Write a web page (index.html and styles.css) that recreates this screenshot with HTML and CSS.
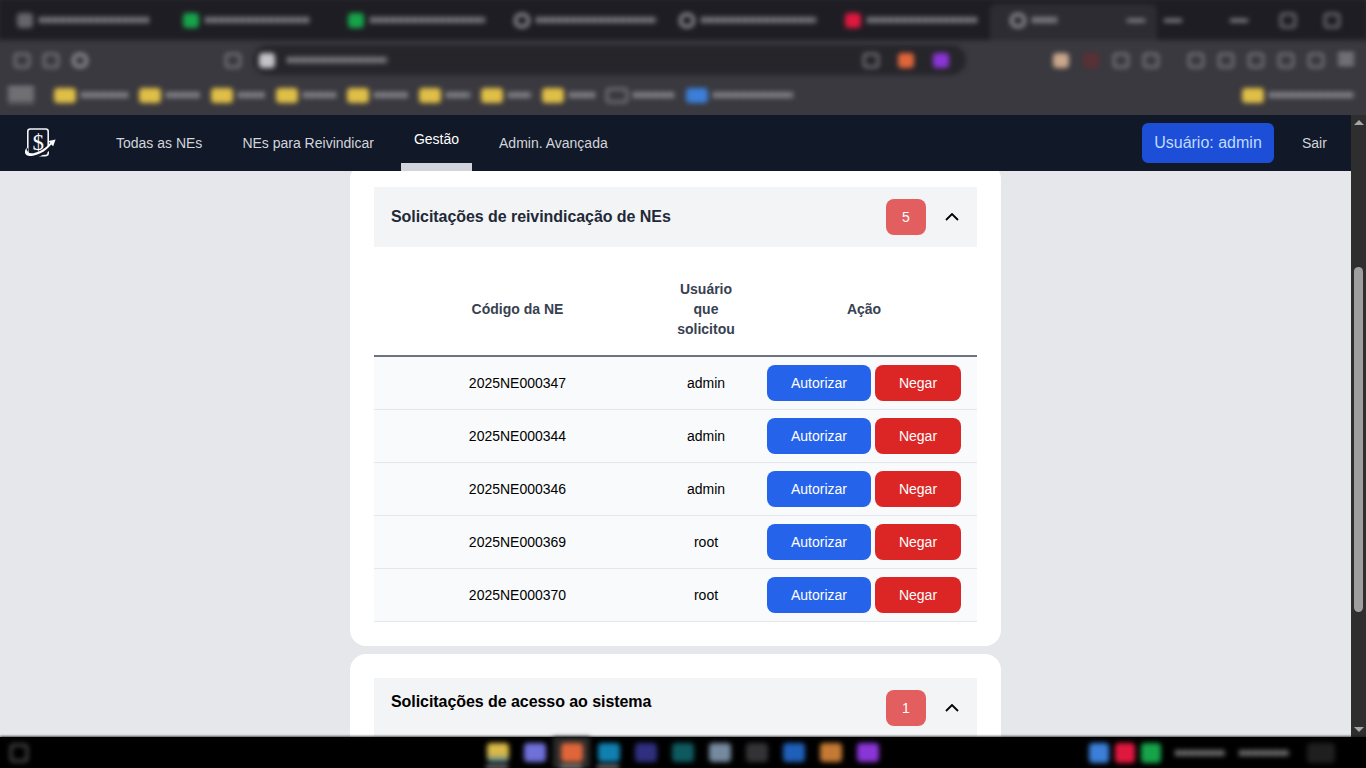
FILE: index.html
```html
<!DOCTYPE html>
<html lang="pt-BR">
<head>
<meta charset="utf-8">
<title>Gestão</title>
<link rel="stylesheet" href="styles.css">
</head>
<body>
<div class="browser">
  <div class="tabstrip">
    <div class="tab"><i class="ico grey"></i><b class="bar w110"></b></div>
    <div class="tab"><i class="ico green"></i><b class="bar w105"></b></div>
    <div class="tab"><i class="ico green"></i><b class="bar w115"></b></div>
    <div class="tab"><i class="ico ring"></i><b class="bar w120"></b></div>
    <div class="tab"><i class="ico ring"></i><b class="bar w115"></b></div>
    <div class="tab"><i class="ico crimson"></i><b class="bar w110"></b></div>
    <div class="tab tab-active"><i class="ico ring"></i><b class="bar w25"></b><span class="spacer"></span><i class="dash"></i></div>
    <i class="dash plus"></i>
    <span class="spacer"></span>
    <i class="dash"></i><i class="ico ghost"></i><i class="ico ghost"></i>
  </div>
  <div class="toolbar">
    <i class="ico ghost"></i><i class="ico ghost"></i><i class="ico ring"></i>
    <i class="ico ghost home"></i>
    <div class="address">
      <i class="ico pale"></i><b class="bar w100"></b><span class="spacer"></span>
      <i class="ico ghost"></i><i class="ico orange"></i><i class="ico purple"></i>
    </div>
    <div class="ext">
      <i class="ico peach"></i><i class="ico darkred"></i><i class="ico ghost"></i><i class="ico ghost"></i>
      <i class="ext-gap"></i>
      <i class="ico ghost"></i><i class="ico ghost"></i><i class="ico ghost"></i><i class="ico ghost"></i><i class="ico ghost"></i><i class="ico lines"></i>
    </div>
  </div>
  <div class="bookmarks">
    <i class="ico lines menu"></i>
    <div class="mark"><i class="ico yellow"></i><b class="bar w47"></b></div>
    <div class="mark"><i class="ico yellow"></i><b class="bar w34"></b></div>
    <div class="mark"><i class="ico yellow"></i><b class="bar w27"></b></div>
    <div class="mark"><i class="ico yellow"></i><b class="bar w33"></b></div>
    <div class="mark"><i class="ico yellow"></i><b class="bar w34"></b></div>
    <div class="mark"><i class="ico yellow"></i><b class="bar w24"></b></div>
    <div class="mark"><i class="ico yellow"></i><b class="bar w23"></b></div>
    <div class="mark"><i class="ico yellow"></i><b class="bar w26"></b></div>
    <div class="mark"><i class="ico ghost"></i><b class="bar w42"></b></div>
    <div class="mark"><i class="ico blue"></i><b class="bar w80"></b></div>
    <span class="spacer"></span>
    <div class="mark"><i class="ico yellow"></i><b class="bar w85"></b></div>
  </div>
</div>

<div class="app">
  <div class="page">
    <nav class="nav">
      <svg class="logo" viewBox="0 0 32 30" aria-hidden="true">
        <rect x="3.8" y="1" width="20.4" height="26.6" rx="2.5" fill="none" stroke="#f3f4f6" stroke-width="1.6"/>
        <text x="14.3" y="21.5" text-anchor="middle" class="logo-text">$</text>
        <path d="M3 20 C-1 26 3 29 9 28 C17 27 24 22 28 17" fill="none" stroke="#111827" stroke-width="4"/>
        <path d="M2.6 19.4 C-1.6 26 3 29 9 27.8 C17 26.4 23.6 21.4 27.2 16.6 L29.2 18.2 L31.6 11.4 L24.4 13 L26 15 C22 20 16 24 9.4 25.2 C5 26 2.2 24 2.6 19.4 Z" fill="#f9fafb"/>
      </svg>
      <div class="nav-links">
        <a class="nav-link">Todas as NEs</a>
        <a class="nav-link">NEs para Reivindicar</a>
        <a class="nav-link nav-link-active">Gestão</a>
        <a class="nav-link">Admin. Avançada</a>
      </div>
      <div class="nav-user">Usuário: admin</div>
      <a class="nav-exit">Sair</a>
    </nav>
    <main class="content">
      <section class="card">
        <header class="card-head">
          <h2 class="card-title">Solicitações de reivindicação de NEs</h2>
          <span class="badge">5</span>
          <svg class="chevron" viewBox="0 0 14 8" aria-hidden="true"><path d="M1 7 L7 1 L13 7" fill="none" stroke="#000" stroke-width="1.8"/></svg>
        </header>
        <table class="table">
          <colgroup><col class="col-code"><col class="col-user"><col class="col-action"></colgroup>
          <thead>
            <tr><th>Código da NE</th><th>Usuário que solicitou</th><th>Ação</th></tr>
          </thead>
          <tbody>
            <tr><td>2025NE000347</td><td>admin</td><td><div class="actions"><button class="btn btn-ok">Autorizar</button><button class="btn btn-no">Negar</button></div></td></tr>
            <tr><td>2025NE000344</td><td>admin</td><td><div class="actions"><button class="btn btn-ok">Autorizar</button><button class="btn btn-no">Negar</button></div></td></tr>
            <tr><td>2025NE000346</td><td>admin</td><td><div class="actions"><button class="btn btn-ok">Autorizar</button><button class="btn btn-no">Negar</button></div></td></tr>
            <tr><td>2025NE000369</td><td>root</td><td><div class="actions"><button class="btn btn-ok">Autorizar</button><button class="btn btn-no">Negar</button></div></td></tr>
            <tr><td>2025NE000370</td><td>root</td><td><div class="actions"><button class="btn btn-ok">Autorizar</button><button class="btn btn-no">Negar</button></div></td></tr>
          </tbody>
        </table>
      </section>
      <section class="card">
        <header class="card-head">
          <h2 class="card-title card-title-raised">Solicitações de acesso ao sistema</h2>
          <span class="badge">1</span>
          <svg class="chevron" viewBox="0 0 14 8" aria-hidden="true"><path d="M1 7 L7 1 L13 7" fill="none" stroke="#000" stroke-width="1.8"/></svg>
        </header>
      </section>
    </main>
  </div>
  <div class="scrollbar">
    <i class="arrow arrow-up"></i>
    <i class="thumb"></i>
    <span class="spacer"></span>
    <i class="arrow arrow-down"></i>
  </div>
</div>

<footer class="taskbar">
  <i class="ico ghost start"></i>
  <div class="dock">
    <div class="slot"><i class="ico yellowblue"></i><u class="pin"></u></div>
    <div class="slot"><i class="ico violet"></i></div>
    <div class="slot slot-active"><i class="ico orange"></i><u class="pin"></u></div>
    <div class="slot"><i class="ico teal"></i><u class="pin"></u></div>
    <div class="slot"><i class="ico indigo"></i></div>
    <div class="slot"><i class="ico darkteal"></i></div>
    <div class="slot"><i class="ico slate"></i></div>
    <div class="slot"><i class="ico dim"></i></div>
    <div class="slot"><i class="ico royal"></i></div>
    <div class="slot"><i class="ico amber"></i></div>
    <div class="slot"><i class="ico purple"></i></div>
  </div>
  <div class="tray">
    <i class="ico blue"></i><i class="ico crimson"></i><i class="ico green"></i>
    <b class="bar w50 tray-bar"></b><b class="bar w50 tray-bar"></b>
    <i class="ico dim box"></i>
  </div>
</footer>
</body>
</html>
```

FILE: styles.css
```css
* { box-sizing: border-box; }
html, body { margin: 0; height: 100%; }
body {
  width: 1366px; height: 768px; overflow: hidden;
  display: flex; flex-direction: column;
  font-family: "Liberation Sans", Arial, sans-serif;
  font-size: 14px; background: #000;
}

/* Blurred browser chrome */
.browser { height: 115px; flex: none; overflow: hidden; background: #3a393f; }
.tabstrip, .toolbar, .bookmarks { display: flex; align-items: center; filter: blur(2.4px); }
.tabstrip { height: 42px; margin: -2px -2px 0; padding: 2px 0 0 10px; background: #1e1d23; }
.toolbar { height: 38px; padding: 2px 0 0 14px; gap: 13px; }
.bookmarks { height: 37px; padding: 0 12px 3px 8px; }
.spacer { flex: 1; }
.tab { width: 165.5px; height: 40px; padding-left: 9px; display: flex; align-items: center; gap: 6px; flex: none; }
.tab-active {
  width: 167px; height: 36px; align-self: flex-end; margin-left: -11px; padding: 0 12px 4px 20px;
  background: #2d2c32; border-radius: 6px 6px 0 0;
}
.ico { width: 16px; height: 15px; flex: none; display: block; border-radius: 4px; background: #77767c; }
.bar {
  display: block; height: 6px; flex: none; opacity: .6;
  background: repeating-linear-gradient(90deg, #c4c3c7 0 5px, #77767c 5px 7px);
}
.w23 { width: 23px; } .w24 { width: 24px; } .w25 { width: 25px; } .w26 { width: 26px; } .w27 { width: 27px; }
.w33 { width: 33px; } .w34 { width: 34px; } .w42 { width: 42px; } .w47 { width: 47px; } .w50 { width: 50px; }
.w80 { width: 80px; } .w85 { width: 85px; } .w100 { width: 100px; } .w105 { width: 105px; }
.w110 { width: 110px; } .w115 { width: 115px; } .w120 { width: 120px; }
.dash { display: block; width: 18px; height: 3px; background: #9b9aa0; flex: none; }
.plus { margin-left: 7px; }
.tabstrip > .dash:not(.plus) { margin-right: 32px; }
.tabstrip > .ghost { margin-right: 28px; }
.grey { background: #66656b; }
.ghost { background: transparent; border: 2px solid #8a898f; }
.ring { background: transparent; border: 3px solid #a09fa4; border-radius: 7px; }
.pale { background: #c4c3c7; }
.green { background: #17a34a; }
.crimson { background: #e0183f; }
.orange { background: #e0663a; }
.purple { background: #8a35d6; }
.peach { background: #c9a78c; }
.darkred { background: #5a3035; }
.yellow { background: #e0bf48; }
.blue { background: #3b7fd8; }
.yellowblue { background: linear-gradient(#d9b948 60%, #3f7fa0); }
.violet { background: #6f70d8; }
.teal { background: #1180b0; }
.indigo { background: #2f2f80; }
.darkteal { background: #0e5a60; }
.slate { background: #76899f; }
.dim { background: #333336; }
.royal { background: #1f5fb8; }
.amber { background: #c47a35; }
.lines { background: repeating-linear-gradient(#c2c1c5 0 2px, transparent 2px 5px); border-radius: 0; }
.home { margin-left: 124px; }
.address {
  width: 713px; height: 30px; border-radius: 15px; background: #26252a;
  display: flex; align-items: center; gap: 19px; padding: 0 17px 0 6px; margin-left: -1px;
}
.address .bar { margin-left: -7px; }
.ext { display: flex; align-items: center; gap: 14px; margin-left: 74px; }
.ext-gap { width: 15px; margin: 0 -7px; }
.menu { width: 26px; height: 16px; margin-right: 20px; }
.mark { display: flex; align-items: center; gap: 5px; flex: none; margin-right: 11px; }
.mark .ico { width: 22px; }
.mark:last-child { margin-right: 0; }

/* App */
.app { height: 622px; flex: none; display: flex; }
.page { width: 1351px; display: flex; flex-direction: column; background: #e5e7eb; }
.nav {
  height: 56px; flex: none; display: flex; align-items: center;
  padding: 0 24px; background: #111827; position: relative; z-index: 1;
}
.logo { width: 32px; height: 30px; flex: none; }
.logo-text { font-family: "Liberation Serif", serif; font-size: 23px; fill: #f9fafb; }
.nav-links { display: flex; align-items: stretch; height: 56px; margin-left: 46px; flex: 1; gap: 12px; }
.nav-link { display: flex; align-items: center; padding: 0 14px; color: #d1d5db; font-size: 14px; }
.nav-link-active { color: #fff; border-bottom: 8px solid #d1d5db; margin: 0 1.5px; padding: 0 12.5px; }
.nav-user {
  width: 132px; height: 40px; line-height: 40px; text-align: center;
  background: #1d4ed8; color: #bfdbfe; border-radius: 6px; font-size: 16px;
}
.nav-exit { color: #d1d5db; margin-left: 28px; width: 25px; white-space: nowrap; }

.content { flex: 1; min-height: 0; overflow: hidden; display: flex; flex-direction: column; align-items: center; gap: 8px; }
.card { width: 651px; flex: none; padding: 24px; background: #fff; border-radius: 16px; }
.card:first-child { margin-top: -8px; }
.card-head { height: 60px; display: flex; align-items: center; padding: 0 18px 0 17px; background: #f3f4f6; }
.card-title { flex: 1; margin: 0; font-size: 16px; line-height: 24px; font-weight: 700; color: #1f2937; letter-spacing: -.06px; }
.card-title-raised { color: #000; margin-bottom: 12px; }
.badge {
  width: 40px; height: 36px; line-height: 36px; text-align: center;
  background: #e25e5f; color: #fff; border-radius: 8px; font-size: 14px;
}
.chevron { width: 14px; height: 8px; margin-left: 19px; flex: none; }

.table { width: 603px; margin-top: 16px; border-collapse: collapse; table-layout: fixed; font-size: 14px; }
.col-code { width: 287px; }
.col-user { width: 90px; }
.col-action { width: 226px; }
.table th {
  padding: 16px; line-height: 20px; font-weight: 700; color: #374151; text-align: center;
  border-bottom: 2px solid #6b7280;
}
.table td {
  height: 53px; padding: 0; text-align: center; color: #000;
  background: #f9fafb; border-bottom: 1px solid #e5e7eb;
}
.actions { display: flex; gap: 4px; justify-content: flex-start; padding-left: 16px; }
.btn {
  height: 36px; border: 0; border-radius: 8px; color: #fff;
  font-family: inherit; font-size: 14px; padding: 0;
}
.btn-ok { width: 104px; background: #2563eb; }
.btn-no { width: 86px; background: #dc2626; }

.scrollbar { width: 15px; flex: none; background: #2e2e2e; display: flex; flex-direction: column; align-items: center; padding: 5px 0; }
.arrow { display: block; width: 0; height: 0; border-left: 5px solid transparent; border-right: 5px solid transparent; flex: none; }
.arrow-up { border-bottom: 5px solid #a6a6a6; }
.arrow-down { border-top: 5px solid #a6a6a6; }
.thumb { display: block; width: 9px; height: 345px; margin-top: 142px; border-radius: 5px; background: #9f9f9f; flex: none; }

/* Taskbar */
.taskbar { height: 31px; flex: none; display: flex; align-items: center; background: #000; position: relative; box-shadow: 0 -1px 2px rgba(20,22,26,.7); padding-left: 10px; }
.start { width: 18px; height: 18px; border-color: #666; filter: blur(2.5px); }
.dock { display: flex; height: 31px; margin-left: 451px; filter: blur(2.4px); }
.slot { width: 37px; height: 31px; display: flex; align-items: center; justify-content: center; position: relative; }
.slot .ico { width: 22px; height: 19px; }
.slot-active { background: #2b2b2b; }
.pin { position: absolute; bottom: 0; left: 7px; width: 22px; height: 2px; background: #e4e4e4; }
.tray { display: flex; align-items: center; gap: 6px; margin-left: 203px; filter: blur(2.4px); }
.tray .ico { width: 20px; height: 20px; }
.tray-bar { margin-left: 8px; }
.tray .box { margin-left: 12px; width: 28px; height: 20px; background: #1f1f1f; }
```
